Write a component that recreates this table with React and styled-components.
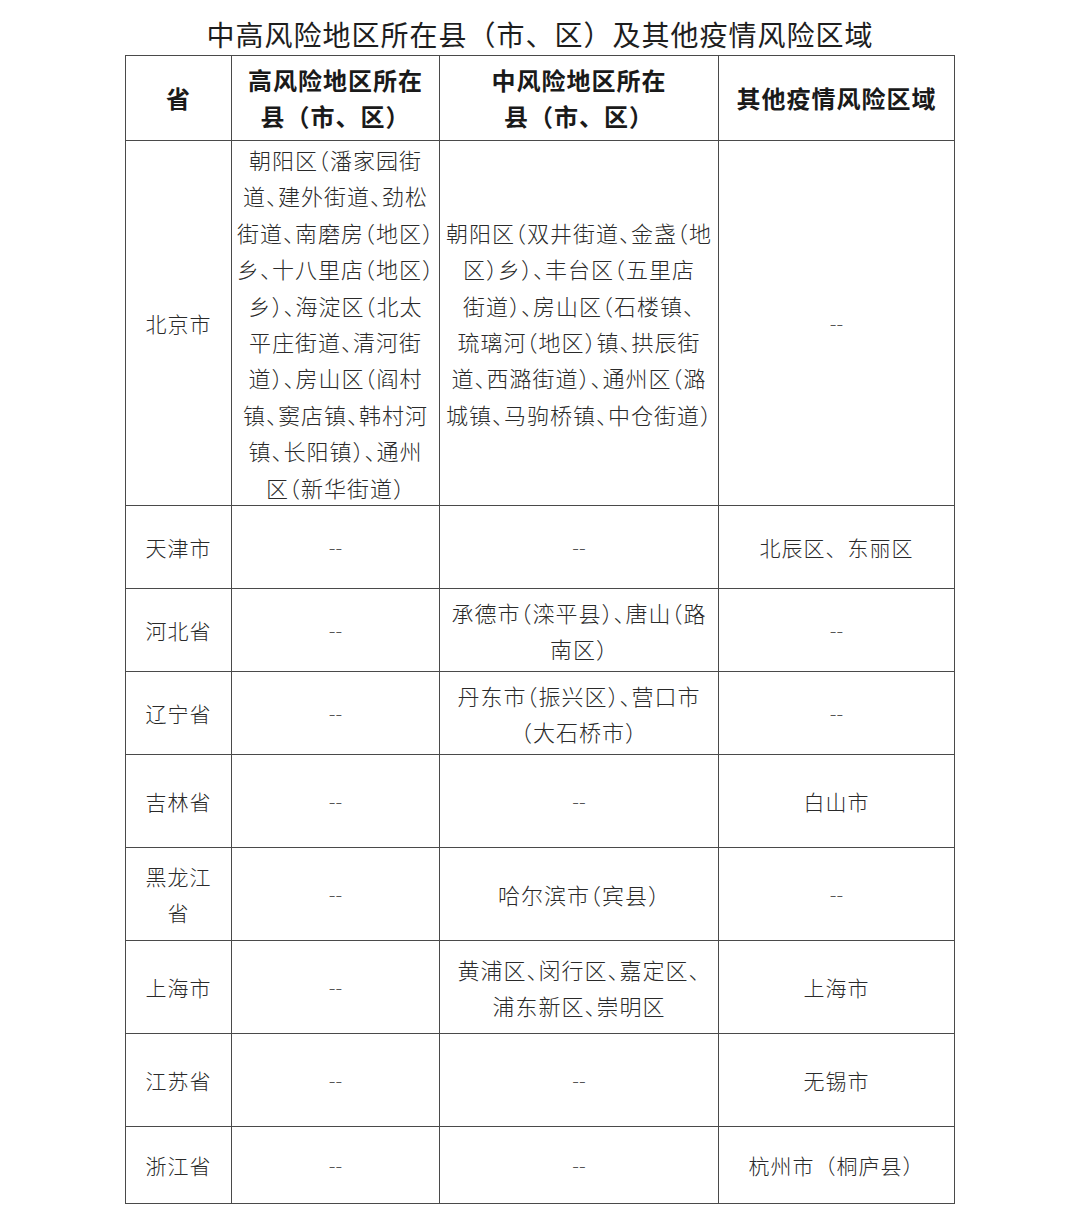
import React from 'react';
import styled, { createGlobalStyle } from 'styled-components';

const GlobalStyle = createGlobalStyle`
  html, body {
    margin: 0;
    padding: 0;
    background: #ffffff;
  }
  body {
    font-family: "Noto Sans CJK SC", "Noto Sans", sans-serif;
    color: #262626;
  }
`;

const rows = [
  {
    prov: ['北京市'],
    height: 361,
    high: [
      '朝阳区（潘家园街',
      '道、建外街道、劲松',
      '街道、南磨房（地区）',
      '乡、十八里店（地区）',
      '乡）、海淀区（北太',
      '平庄街道、清河街',
      '道）、房山区（阎村',
      '镇、窦店镇、韩村河',
      '镇、长阳镇）、通州',
      '区（新华街道）',
    ],
    mid: [
      '朝阳区（双井街道、金盏（地',
      '区）乡）、丰台区（五里店',
      '街道）、房山区（石楼镇、',
      '琉璃河（地区）镇、拱辰街',
      '道、西潞街道）、通州区（潞',
      '城镇、马驹桥镇、中仓街道）',
    ],
    other: ['--'],
  },
  { prov: ['天津市'], height: 83, high: ['--'], mid: ['--'], other: ['北辰区、东丽区'] },
  {
    prov: ['河北省'],
    height: 83,
    high: ['--'],
    mid: ['承德市（滦平县）、唐山（路', '南区）'],
    other: ['--'],
  },
  {
    prov: ['辽宁省'],
    height: 83,
    high: ['--'],
    mid: ['丹东市（振兴区）、营口市', '（大石桥市）'],
    other: ['--'],
  },
  { prov: ['吉林省'], height: 93, high: ['--'], mid: ['--'], other: ['白山市'] },
  { prov: ['黑龙江', '省'], height: 93, high: ['--'], mid: ['哈尔滨市（宾县）'], other: ['--'] },
  {
    prov: ['上海市'],
    height: 93,
    high: ['--'],
    mid: ['黄浦区、闵行区、嘉定区、', '浦东新区、崇明区'],
    other: ['上海市'],
  },
  { prov: ['江苏省'], height: 93, high: ['--'], mid: ['--'], other: ['无锡市'] },
  { prov: ['浙江省'], height: 77, high: ['--'], mid: ['--'], other: ['杭州市（桐庐县）'] },
];

const Page = styled.div`
  width: 1080px;
  padding-top: 14px;
  padding-bottom: 22px;
`;

const Title = styled.h1`
  margin: 0;
  height: 41px;
  text-align: center;
  font-size: 28px;
  font-weight: 400;
  line-height: 41px;
  letter-spacing: 1px;
  color: #1e1e1e;
`;

const Table = styled.table`
  margin: 0 auto;
  width: 829px;
  border-collapse: collapse;
  table-layout: fixed;
  border: 1px solid #4a4a4a;
`;

const Col = styled.col`
  width: ${(p) => p.w}px;
`;

const Row = styled.tr`
  height: ${(p) => p.h}px;
`;

const HeadCell = styled.th`
  border: 1px solid #4a4a4a;
  padding: 0;
  text-align: center;
  vertical-align: middle;
  font-size: 24px;
  font-weight: 700;
  line-height: 36px;
  letter-spacing: 1px;
  color: #1a1a1a;
`;

const Cell = styled.td`
  border: 1px solid #4a4a4a;
  padding: 0;
  text-align: center;
  vertical-align: middle;
  font-size: ${(p) => (p.$tight ? '22px' : '21px')};
  font-weight: 300;
  line-height: 36.4px;
  letter-spacing: 1px;
  color: #2a2a2a;
  font-feature-settings: ${(p) => (p.$tight ? '"halt"' : 'normal')};
`;

const Line = styled.span`
  display: block;
  white-space: nowrap;
`;

const Dash = styled.span`
  display: block;
  font-size: 20px;
  letter-spacing: 0;
  color: #555;
`;

const Lines = ({ items }) =>
  items.map((t, i) =>
    t === '--' ? <Dash key={i}>--</Dash> : <Line key={i}>{t}</Line>
  );

export default function App() {
  return (
    <Page>
      <GlobalStyle />
      <Title>中高风险地区所在县（市、区）及其他疫情风险区域</Title>
      <Table>
        <colgroup>
          <Col w={106} />
          <Col w={208} />
          <Col w={279} />
          <Col w={236} />
        </colgroup>
        <thead>
          <Row h={85}>
            <HeadCell>省</HeadCell>
            <HeadCell>
              <Line>高风险地区所在</Line>
              <Line>县（市、区）</Line>
            </HeadCell>
            <HeadCell>
              <Line>中风险地区所在</Line>
              <Line>县（市、区）</Line>
            </HeadCell>
            <HeadCell>其他疫情风险区域</HeadCell>
          </Row>
        </thead>
        <tbody>
          {rows.map((r) => (
            <Row key={r.prov.join('')} h={r.height}>
              <Cell>
                <Lines items={r.prov} />
              </Cell>
              <Cell $tight>
                <Lines items={r.high} />
              </Cell>
              <Cell $tight>
                <Lines items={r.mid} />
              </Cell>
              <Cell>
                <Lines items={r.other} />
              </Cell>
            </Row>
          ))}
        </tbody>
      </Table>
    </Page>
  );
}
